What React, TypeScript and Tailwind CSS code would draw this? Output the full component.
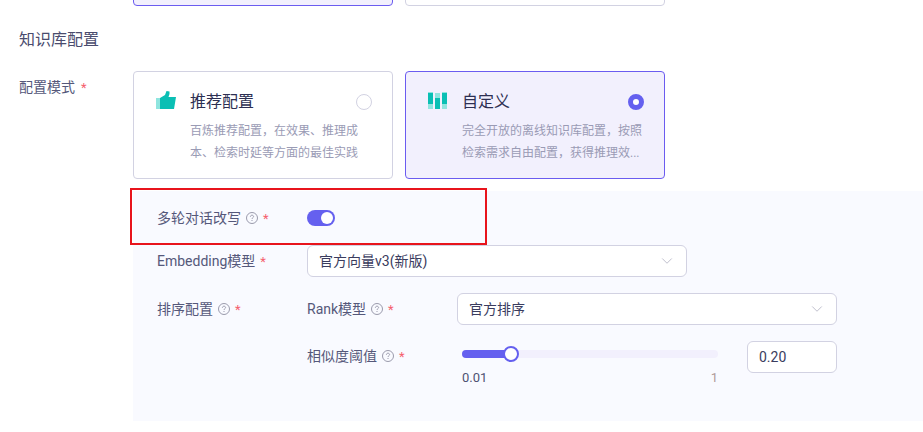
import { ChevronDown } from 'lucide-react';

const FONT = "font-['Roboto','Noto_Sans_CJK_SC',sans-serif]";

function Thumb() {
  return (
    <svg width="20" height="18" viewBox="0 0 20 18" className="shrink-0">
      <rect x="0" y="7" width="4" height="11" fill="#8fe5df" />
      <path d="M4 7 L9 4 L10.5 0 L13.5 0.5 L13.5 3 L12.5 6 L20 6 L18 18 L4 18 Z" fill="#0abfb4" />
    </svg>
  );
}

function Bars() {
  return (
    <svg width="19" height="17" viewBox="0 0 19 17" className="shrink-0">
      <rect x="0" y="0" width="5" height="17" fill="#8fe5df" />
      <rect x="0" y="1" width="5" height="11" fill="#0abfb4" />
      <rect x="7" y="1" width="5" height="16" fill="#8fe5df" />
      <rect x="7" y="6" width="5" height="11" fill="#0abfb4" />
      <rect x="14" y="0" width="5" height="17" fill="#8fe5df" />
      <rect x="14" y="1" width="5" height="11" fill="#0abfb4" />
    </svg>
  );
}

function Help() {
  return (
    <svg width="12" height="12" viewBox="0 0 12 12" fill="none" className="shrink-0">
      <circle cx="6" cy="6" r="5.5" stroke="#9a9aac" />
      <path d="M4.4 4.8 C4.4 3.8 5.1 3.2 6 3.2 C6.9 3.2 7.6 3.8 7.6 4.6 C7.6 5.6 6 5.8 6 7" stroke="#9a9aac" />
      <rect x="5.5" y="8" width="1" height="1" fill="#9a9aac" />
    </svg>
  );
}

function Star() {
  return <span className="text-[13px] leading-none text-[#f5606e]">*</span>;
}

function FieldLabel({ text, help = true }: { text: string; help?: boolean }) {
  return (
    <div className="flex items-center gap-[5px] text-[14px] leading-[22px] text-[#55587a]">
      <span>{text}</span>
      {help && <Help />}
      <Star />
    </div>
  );
}

function ModeCard({ title, desc, active, icon }: { title: string; desc: string[]; active?: boolean; icon: React.ReactNode }) {
  return (
    <div
      className={`flex h-[108px] w-[260px] flex-col rounded-[4px] border pt-[19px] pl-[22px] pr-[20px] ${
        active ? 'border-[#6b5cf0] bg-[#f2f0fd]' : 'border-[#d2d2e2] bg-white'
      }`}
    >
      <div className="flex h-[22px] items-center">
        <div className="flex w-[34px] items-center pb-[4px]">{icon}</div>
        <span className="text-[16px] leading-[22px] text-[#2d2f52]">{title}</span>
        {active ? (
          <span className="ml-auto h-4 w-4 rounded-full border-[5px] border-[#6560ef] bg-white" />
        ) : (
          <span className="ml-auto h-4 w-4 rounded-full border border-[#d2d2e2] bg-white" />
        )}
      </div>
      <div className="mt-[7px] pl-[34px] text-[12px] leading-[22px] whitespace-nowrap text-[#9a9bb5]">
        {desc.map((line) => (
          <div key={line}>{line}</div>
        ))}
      </div>
    </div>
  );
}

function Select({ value }: { value: string }) {
  return (
    <div className="flex h-8 w-[380px] items-center justify-between rounded-[6px] border border-[#d2d2e2] bg-white pr-[10px] pl-[11px] text-[14px] text-[#3a3c5e]">
      <span>{value}</span>
      <ChevronDown size={18} strokeWidth={1} className="text-[#a9a9bb]" />
    </div>
  );
}

export default function App() {
  return (
    <div className={`relative h-[432px] w-[923px] overflow-hidden bg-white ${FONT}`}>
      {/* cards scrolled off the top */}
      <div className="ml-[133px] flex h-[6px] items-end gap-3 overflow-hidden">
        <div className="h-[40px] w-[260px] shrink-0 rounded-[4px] border border-[#6b5cf0] bg-[#f2f0fd]" />
        <div className="h-[40px] w-[260px] shrink-0 rounded-[4px] border border-[#d2d2e2] bg-white" />
      </div>

      <div className="mt-[23px] pl-[19px] text-[16px] leading-[22px] text-[#4a4c6e]">知识库配置</div>

      <div className="mt-[20px] flex">
        <div className="flex h-[32px] w-[133px] shrink-0 items-center gap-[6px] pl-[19px] text-[14px] text-[#55587a]">
          <span className="whitespace-nowrap">配置模式</span>
          <Star />
        </div>
        <div className="flex gap-3">
          <ModeCard
            title="推荐配置"
            icon={<Thumb />}
            desc={['百炼推荐配置\uFF0C在效果、推理成', '本、检索时延等方面的最佳实践']}
          />
          <ModeCard
            active
            title="自定义"
            icon={<Bars />}
            desc={['完全开放的离线知识库配置\uFF0C按照', '检索需求自由配置\uFF0C获得推理效...']}
          />
        </div>
      </div>

      <div className="mt-3 ml-[133px] h-[230px] bg-[#f9faff] pt-[16px] pl-[24px]">
        <div className="flex h-[22px] items-center">
          <div className="w-[150px]">
            <FieldLabel text="多轮对话改写" />
          </div>
          <div className="flex h-4 w-7 items-center justify-end rounded-full bg-[#6560ef] pr-[2px]">
            <span className="h-3 w-3 rounded-full bg-white" />
          </div>
        </div>

        <div className="mt-[16px] flex h-8 items-center">
          <div className="w-[150px]">
            <FieldLabel text="Embedding模型" help={false} />
          </div>
          <Select value="官方向量v3(新版)" />
        </div>

        <div className="mt-4 flex">
          <div className="w-[150px] pt-[5px]">
            <FieldLabel text="排序配置" />
          </div>
          <div>
            <div className="flex h-8 items-center">
              <div className="w-[150px]">
                <FieldLabel text="Rank模型" />
              </div>
              <Select value="官方排序" />
            </div>
            <div className="mt-4 flex">
              <div className="w-[155px] pt-[4px]">
                <FieldLabel text="相似度阈值" />
              </div>
              <div className="w-[256px] pt-[9px]">
                <div className="relative h-2 rounded-full bg-[#f2f0fd]">
                  <div className="h-2 w-[49px] rounded-full bg-[#6560ef]" />
                  <span className="absolute top-[-4px] left-[41px] h-4 w-4 rounded-full border-2 border-[#6560ef] bg-white" />
                </div>
                <div className="mt-[10px] flex justify-between text-[13px] leading-[20px]">
                  <span className="text-[#4f5273]">0.01</span>
                  <span className="text-[#b09a9a]">1</span>
                </div>
              </div>
              <div className="ml-[29px] flex h-8 w-[90px] items-center rounded-[6px] border border-[#d2d2e2] bg-white pl-[11px] text-[14px] text-[#3a3c5e]">
                0.20
              </div>
            </div>
          </div>
        </div>
      </div>

      {/* red annotation box over the page */}
      <div className="absolute top-[188px] left-[130px] h-[57px] w-[357px] border-2 border-[#e8141c]" />
    </div>
  );
}
